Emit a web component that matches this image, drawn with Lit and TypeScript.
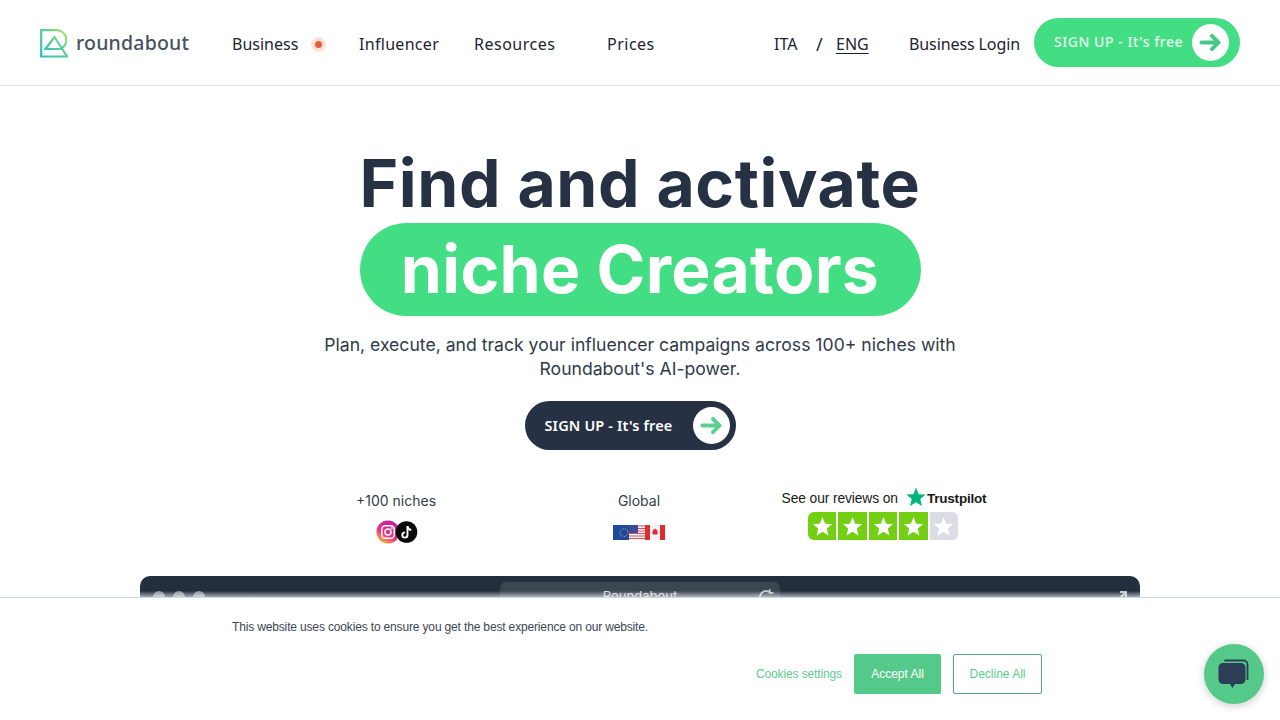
import { LitElement, html, css, svg } from "lit";
import { customElement } from "lit/decorators.js";

const arrow = (c: string) => html`<svg viewBox="0 0 24 24" width="23" height="23" fill="none" stroke="${c}" stroke-width="4" stroke-linecap="round" stroke-linejoin="round"><path d="M2.500 12H20.500M13.500 5L20.500 12l-7 7"/></svg>`;

const starPath = "M10 1.800l2.300 5.700 6.100.400-4.700 3.900 1.500 6-5.200-3.300-5.200 3.300 1.500-6L1.600 7.900l6.100-.400z";

@customElement("app-root")
export class AppRoot extends LitElement {
  static styles = css`
    :host { display: block; position: relative; width: 1280px; height: 720px; overflow: hidden; background: #fff; color: #232f3e; font-family: "Inter", sans-serif; }
    * { box-sizing: border-box; }
    header { height: 86px; border-bottom: 1px solid #dfe3e6; display: flex; align-items: center; padding: 0 40px; color: #1d2430; }
    .logo { display: flex; align-items: center; width: 192px; gap: 7px; margin-top: 1px; }
    .logo span { font: 500 19.500px "Noto Sans", sans-serif; color: #46525f; letter-spacing: 0.200px; margin-top: -2px; }
    .nav { font: 400 16px "Noto Sans", sans-serif; white-space: nowrap; margin-top: 3px; }
    .biz { display: flex; align-items: center; width: 127px; }
    .dot { width: 7px; height: 7px; margin-left: 17px; flex: none; border-radius: 50%; background: #ee5a3c; box-shadow: 0 0 0 4px #fbe2db; }
    .inf { width: 115px; letter-spacing: 0.300px; }
    .res { width: 133px; letter-spacing: 0.500px; }
    .pri { letter-spacing: 0.500px; }
    .right { margin-left: auto; display: flex; align-items: center; }
    .ita { width: 42px; }
    .slash { width: 20px; font-size: 18px; }
    .eng { width: 73px; text-decoration: underline; text-underline-offset: 3px; }
    .login { width: 125px; letter-spacing: -0.100px; }
    .cta-top { width: 206px; height: 49px; border-radius: 25px; background: #43de84; display: flex; align-items: center; justify-content: space-between; padding: 0 11px 0 20px; color: #e6fbef; font: 500 14px "Noto Sans", sans-serif; letter-spacing: 0.550px; white-space: nowrap; }
    .cta-top > span:first-child { margin-top: -3px; }
    .circle { width: 37px; height: 37px; border-radius: 50%; background: #fff; display: flex; align-items: center; justify-content: center; flex: none; }
    main { display: flex; flex-direction: column; align-items: center; padding-top: 58px; }
    h1 { margin: 0; font: 700 66px/78px "Inter", sans-serif; letter-spacing: 0.600px; color: #263243; height: 79px; white-space: nowrap; }
    .pill { width: 561px; height: 93px; border-radius: 47px; background: #43de84; color: #fff; font: 700 66px/93px "Inter", sans-serif; text-align: center; white-space: nowrap; letter-spacing: 0.300px; }
    .sub { margin: 17px 0 0; width: 700px; font-size: 17.600px; line-height: 24px; text-align: center; color: #2f3a49; letter-spacing: 0; }
    .cta { margin: 20px 20px 0 0; width: 211px; height: 49px; border-radius: 25px; background: #263243; color: #fff; display: flex; align-items: center; justify-content: space-between; padding: 0 6px 0 20px; font: 600 14.500px "Noto Sans", sans-serif; letter-spacing: 0.150px; white-space: nowrap; }
    .cta > span:first-child { margin-top: -2px; }
    .stats { display: flex; align-items: flex-start; margin-top: 36px; width: 700px; padding-left: 36px; font-size: 14px; color: #333d4b; }
    .stat { display: flex; flex-direction: column; align-items: center; gap: 11px; padding-top: 6px; }
    .s1 { width: 140px; }
    .s1 svg { margin-left: 2px; }
    .s2 { width: 60px; margin-left: 143px; }
    .s3 { margin-left: 113px; width: 204px; padding-top: 1px; gap: 3px; }
    .tp { display: flex; align-items: center; font: 400 13.800px "Liberation Sans", sans-serif; color: #191919; white-space: nowrap; height: 22px; letter-spacing: -0.100px; }
    .tp b { font-weight: 700; font-size: 13.500px; letter-spacing: -0.200px; }
    .tp svg { margin: -3px 1px 0 8px; }
    .stars { display: flex; gap: 2px; width: 150px; height: 28px; border-radius: 6px; overflow: hidden; margin-left: -2px; }
    .stars div { flex: 1; background: #73cf11; display: flex; align-items: center; justify-content: center; }
    .stars div:last-child { background: #dcdce6; }
    .window { position: absolute; left: 140px; top: 576px; width: 1000px; height: 144px; background: #242f3e; border-radius: 10px 10px 0 0; }
    .dots { position: absolute; left: 13px; top: 15px; display: flex; gap: 8px; }
    .dots i { width: 12px; height: 12px; border-radius: 50%; background: #8d959e; display: block; }
    .url { position: absolute; left: 360px; top: 6px; width: 280px; height: 34px; border-radius: 6px; background: #3c4653; color: #d5d8dc; font-size: 13px; text-align: center; padding-top: 6px; }
    .reload { position: absolute; right: 5px; top: 6px; }
    .expand { position: absolute; left: 976px; top: 14px; }
    .cookie { position: absolute; left: 0; top: 597px; width: 1280px; height: 123px; background: #fff; border-top: 1px solid #c8dce4; font-family: "Liberation Sans", sans-serif; font-size: 12px; color: #3d4652; }
    .cookie::before { content: ""; position: absolute; left: 140px; width: 1000px; top: -7px; height: 6px; background: linear-gradient(rgba(255,255,255,0), rgba(255,255,255,.6)); }
    .msg { position: absolute; left: 232px; top: 22px; letter-spacing: -0.155px; white-space: nowrap; }
    .actions { position: absolute; left: 756px; top: 56px; display: flex; align-items: center; }
    .actions .set { color: #5ecb91; width: 98px; letter-spacing: -0.130px; white-space: nowrap; }
    .btn { height: 40px; border-radius: 2px; display: flex; align-items: center; justify-content: center; }
    .accept { width: 87px; background: #55c98a; color: #fff; margin-right: 12px; }
    .decline { width: 89px; border: 1px solid #55a68a; color: #5ecb91; }
    .chat { position: absolute; left: 1204px; top: 644px; width: 60px; height: 60px; border-radius: 50%; background: #55c98a; box-shadow: 0 2px 8px rgba(0,0,0,.2); display: flex; align-items: center; justify-content: center; }
  `;

  render() {
    return html`
      <header>
        <div class="logo">
          <svg width="29" height="29" viewBox="0 0 29 29" fill="none" stroke-width="2.200">
            <defs><linearGradient id="lg" x1="0" y1="1" x2="1" y2="0"><stop offset="0" stop-color="#27bfc4"/><stop offset="0.600" stop-color="#5ccf9c"/><stop offset="1" stop-color="#c9e05e"/></linearGradient></defs>
            <path stroke="url(#lg)" d="M28 27.500H1.200V1.200H16.500a9.700 9.700 0 0 1 5.500 17.800"/>
            <path stroke="url(#lg)" d="M22 20H5.500L14.500 8l12.500 19.500"/>
          </svg>
          <span>roundabout</span>
        </div>
        <div class="nav biz"><span>Business</span><span class="dot"></span></div>
        <div class="nav inf">Influencer</div>
        <div class="nav res">Resources</div>
        <div class="nav pri">Prices</div>
        <div class="right">
          <div class="nav ita">ITA</div>
          <div class="nav slash">/</div>
          <div class="nav eng">ENG</div>
          <div class="nav login">Business Login</div>
          <div class="cta-top"><span>SIGN UP - It's free</span><span class="circle">${arrow("#43c985")}</span></div>
        </div>
      </header>
      <main>
        <h1>Find and activate</h1>
        <div class="pill">niche Creators</div>
        <p class="sub">Plan, execute, and track your influencer campaigns across 100+ niches with Roundabout's AI-power.</p>
        <div class="cta"><span>SIGN UP - It's free</span><span class="circle">${arrow("#5bd08e")}</span></div>
        <div class="stats">
          <div class="stat s1">
            <span>+100 niches</span>
            <svg width="42" height="24" viewBox="0 0 42 24">
              <defs><linearGradient id="ig" x1="0.200" y1="1" x2="0.800" y2="0"><stop offset="0" stop-color="#f9c43c"/><stop offset="0.400" stop-color="#ee2f7c"/><stop offset="1" stop-color="#b51fb0"/></linearGradient></defs>
              <circle cx="12" cy="12" r="11.500" fill="url(#ig)"/>
              <rect x="5.800" y="5.800" width="12.400" height="12.400" rx="3.500" fill="none" stroke="#fff" stroke-width="1.500"/>
              <circle cx="12" cy="12" r="3" fill="none" stroke="#fff" stroke-width="1.500"/>
              <circle cx="15.800" cy="8.200" r="0.900" fill="#fff"/>
              <circle cx="30.500" cy="12" r="10.800" fill="#0a0a0a"/>
              <path d="M31.500 6v9a2.600 2.600 0 1 1-2.600-2.600" fill="none" stroke="#fff" stroke-width="1.900"/>
              <path d="M31.500 6.500c.4 2 1.800 3.300 3.800 3.500" fill="none" stroke="#fff" stroke-width="1.900"/>
            </svg>
          </div>
          <div class="stat s2">
            <span>Global</span>
            <svg width="54" height="24" viewBox="0 0 54 24">
              <rect x="1" y="5" width="22" height="15" fill="#1f4a9c"/>
              <circle cx="12" cy="12.500" r="4" fill="none" stroke="#e8c93c" stroke-width="1" stroke-dasharray="1 1.500"/>
              <rect x="17" y="5" width="20" height="15" fill="#f4f4f6"/>
              <path d="M17 6h20M17 8.500h20M17 11h20M17 13.500h20M17 16h20M17 18.500h20" stroke="#d8505c" stroke-width="1.200"/>
              <rect x="17" y="5" width="9" height="8" fill="#3a4c9c"/>
              <rect x="33" y="5" width="21" height="15" fill="#f5f3f3"/>
              <rect x="33" y="5" width="5" height="15" fill="#dd2c34"/>
              <rect x="48" y="5" width="5" height="15" fill="#dd2c34"/>
              <path d="M43 8l1 2 1.500-.500-.500 3 1.500-.500-1.500 2.500h-4l-1.500-2.500 1.500.500-.500-3 1.500.500z" fill="#dd2c34"/>
            </svg>
          </div>
          <div class="stat s3">
            <div class="tp">See our reviews on
              <svg width="20" height="20" viewBox="0 0 20 20"><path d="${starPath}" fill="#00b67a" transform="translate(-1.500 -1.500) scale(1.150)"/></svg>
              <b>Trustpilot</b>
            </div>
            <div class="stars">
              ${[0, 1, 2, 3, 4].map(() => html`<div><svg width="23" height="23" viewBox="0 0 20 20">${svg`<path d="${starPath}" fill="#fff"/>`}</svg></div>`)}
            </div>
          </div>
        </div>
      </main>
      <div class="window">
        <div class="dots"><i></i><i></i><i></i></div>
        <div class="url">Roundabout
          <svg class="reload" width="18" height="18" viewBox="0 0 24 24" fill="none" stroke="#c4c8cd" stroke-width="2.500"><path d="M20 12a8 8 0 1 1-3-6.200M17 1.500v5h5"/></svg>
        </div>
        <svg class="expand" width="12" height="12" viewBox="0 0 12 12" fill="none" stroke="#c4c8cd" stroke-width="2"><path d="M2 10L10 2M4 2h6v6"/></svg>
      </div>
      <div class="cookie">
        <div class="msg">This website uses cookies to ensure you get the best experience on our website.</div>
        <div class="actions">
          <span class="set">Cookies settings</span>
          <span class="btn accept">Accept All</span>
          <span class="btn decline">Decline All</span>
        </div>
      </div>
      <div class="chat">
        <svg width="32" height="32" viewBox="0 0 32 32">
          <path d="M7 2.500H25.500a4 4 0 0 1 4 4V21" fill="none" stroke="#2c3e55" stroke-width="1.800" stroke-linecap="round"/>
          <path d="M5 5h18a4.500 4.500 0 0 1 4.500 4.500v12A4.500 4.500 0 0 1 23 26h-6l-2.500 4L12 26H5a4.500 4.500 0 0 1-4.500-4.500v-12A4.500 4.500 0 0 1 5 5z" fill="#2c3e55"/>
        </svg>
      </div>
    `;
  }
}
